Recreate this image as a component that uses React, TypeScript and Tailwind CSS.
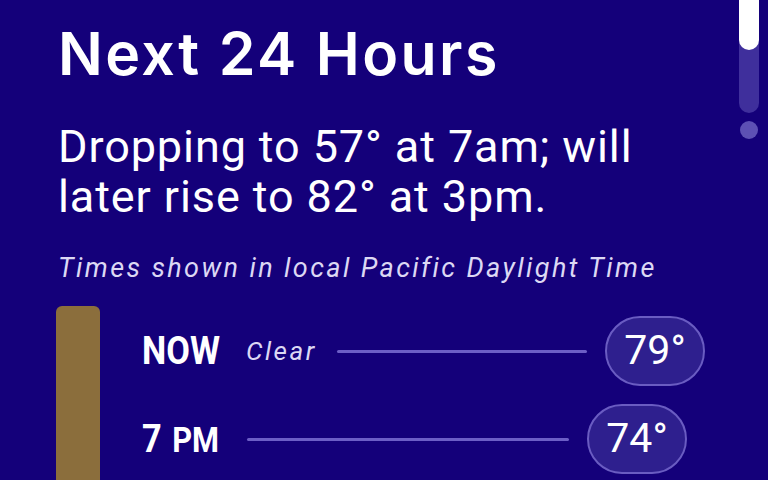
const hours = [
  { label: "NOW", note: "Clear", temp: "79°", right: "mr-[63px]" },
  { label: "7", suffix: "PM", temp: "74°", right: "mr-[81px]" },
];

export default function App() {
  return (
    <div className="relative h-[480px] w-[768px] overflow-hidden bg-[#14007a] font-['Roboto',sans-serif] text-white">
      {/* scroll indicator */}
      <div className="absolute right-[9px] top-0 flex w-[20px] flex-col items-center">
        <div className="flex h-[113px] w-[20px] flex-col rounded-b-full bg-[#3f2f9c]">
          <div className="h-[50px] w-[20px] rounded-b-full bg-white" />
        </div>
        <div className="mt-[8px] h-[18px] w-[18px] rounded-full bg-[#5d50b4]" />
      </div>

      <div className="flex flex-col pl-[58px] pt-[16px]">
        <h1 className="font-['Inter',sans-serif] text-[59px] font-semibold leading-[76px] tracking-[2.4px]">
          Next 24 Hours
        </h1>
        <p className="mt-[30px] w-[620px] text-[45px] leading-[50px] tracking-[0.9px]">
          Dropping to 57° at 7am; will later rise to 82° at 3pm.
        </p>
        <p className="mt-[29px] text-[27px] italic leading-[34px] tracking-[2.4px] text-[#dcd8f4]">
          Times shown in local Pacific Daylight Time
        </p>

        <div className="mt-[21px] flex gap-[42px]">
          <div className="ml-[-2px] h-[200px] w-[44px] rounded-t-[6px] bg-[#8b6e3c]" />
          <div className="flex flex-1 flex-col gap-[18px] pt-[10px]">
            {hours.map((h) => (
              <div key={h.temp} className={`flex h-[70px] items-center ${h.right}`}>
                <span className="w-[80px] shrink-0 font-bold">
                  <span className="inline-block origin-left scale-x-[0.88] whitespace-nowrap text-[39px]">
                    {h.label}
                    {h.suffix && <span className="ml-[12px] text-[35px]">{h.suffix}</span>}
                  </span>
                </span>
                {h.note && (
                  <span className="ml-[24px] text-[26px] italic tracking-[2.5px] text-[#dcd8f4]">{h.note}</span>
                )}
                <div className={`${h.note ? "ml-[20px]" : "ml-[25px]"} mr-[18px] h-[3px] flex-1 rounded-full bg-[#6c5ec6]`} />
                <div className="flex h-[70px] w-[100px] items-center justify-center rounded-full border-2 border-[#6a5cc2] bg-[#2e1f8e] text-[41px]">
                  {h.temp}
                </div>
              </div>
            ))}
          </div>
        </div>
      </div>
    </div>
  );
}
